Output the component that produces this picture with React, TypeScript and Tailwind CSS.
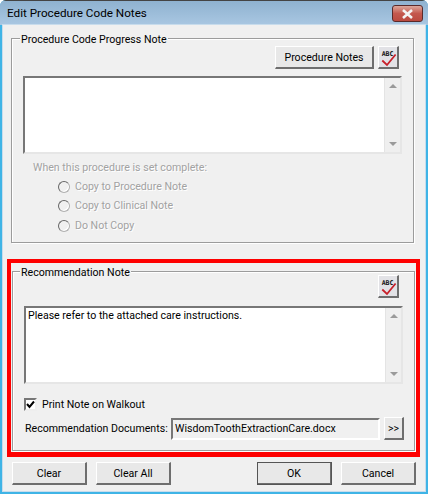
import React from "react";

const font = "font-['Roboto','Liberation_Sans',Arial,sans-serif] text-[10.6px] leading-[14px]";

function SpellIcon() {
  return (
    <svg width="18" height="20" viewBox="0 0 18 20">
      <text x="8.6" y="9" textAnchor="middle" fontFamily="'DejaVu Sans Mono',monospace" fontWeight="700" fontSize="6.6" fill="#111">ABC</text>
      <path d="M3.3 13.5 L8 18 L16.6 7.5" fill="none" stroke="#c8202a" strokeWidth="1.8" />
    </svg>
  );
}

function WinButton({ className, children, dark }: { className: string; children: React.ReactNode; dark?: boolean }) {
  return (
    <div
      className={`flex items-center justify-center bg-[#e8e8e8] text-black border border-r-2 border-b-2 border-t-white border-l-white border-r-[#6e6e6e] border-b-[#6e6e6e] ${dark ? "outline outline-1 -outline-offset-1 outline-[#555]" : ""} ${className}`}
    >
      {children}
    </div>
  );
}

function SpellButton() {
  return (
    <WinButton className="w-[21px] h-[23px] !bg-[#e2e2e6]">
      <SpellIcon />
    </WinButton>
  );
}

function NoteBox({ text, className }: { text?: string; className: string }) {
  return (
    <div className={`flex bg-white border-2 border-t-[#777] border-l-[#777] border-b-[#e6e6e6] border-r-[#e6e6e6] ${className}`}>
      <div className="flex-1 px-[2px] pt-[1px] text-black">{text}</div>
      <div className="w-[16px] bg-[#efefef] flex flex-col items-center justify-between py-[6px] border-l border-[#e4e4e4]">
        <div className="w-0 h-0 border-x-[4px] border-x-transparent border-b-[4px] border-b-[#9a9a9a]" />
        <div className="w-0 h-0 border-x-[4px] border-x-transparent border-t-[4px] border-t-[#9a9a9a]" />
      </div>
    </div>
  );
}

function Radio({ label }: { label: string }) {
  return (
    <div className="flex items-center h-[19.5px] pl-[25px]">
      <div className="w-[12px] h-[12px] rounded-full bg-[#f0f0f0] border border-[#b0b0b0] border-t-[#666] border-l-[#666] shadow-[inset_-1px_-1px_0_#fff]" />
      <span className="ml-[5px] text-[#a2a2a2] [text-shadow:1px_1px_0_#fff]">{label}</span>
    </div>
  );
}

function GroupBox({ title, className, titleClass, children }: { title: string; className: string; titleClass: string; children: React.ReactNode }) {
  return (
    <div className={`relative border border-[#9c9c9c] shadow-[inset_1px_1px_0_#fff,1px_1px_0_#fff] ${className}`}>
      <span className={`absolute top-[-6px] bg-[#f0f0f0] px-[1px] text-black ${titleClass}`}>{title}</span>
      {children}
    </div>
  );
}

export default function App() {
  return (
    <div className={`w-[428px] h-[494px] overflow-hidden rounded-t-[6px] flex flex-col bg-[#3fb4e6] ${font}`}>
      {/* title bar */}
      <div className="h-[25px] shrink-0 flex items-start justify-between bg-gradient-to-b from-[#8fb2d0] to-[#a9c7e2] pl-[7px] pr-[5px] border-t border-[#444]">
        <span className="mt-[5px] text-[11.7px] text-black">Edit Procedure Code Notes</span>
        <div className="w-[31px] h-[17px] mt-[4px] rounded-[3px] border border-[#5a2a2a] bg-gradient-to-b from-[#dba79c] via-[#c4584e] to-[#bb4a40] flex items-center justify-center">
          <svg width="13" height="10" viewBox="0 0 13 10">
            <path d="M2 1 L11 9 M11 1 L2 9" stroke="#f4f4f4" strokeWidth="2.6" />
          </svg>
        </div>
      </div>

      {/* client area */}
      <div className="mx-[3px] mb-[3px] flex-1 bg-[#f0f0f0] flex flex-col pl-[8px] pr-[11px] pt-[13px] shadow-[0_0_0_1px_#c8dcec]">
        <GroupBox title="Procedure Code Progress Note" titleClass="left-[8px]" className="h-[205px] pl-[11px] pr-[11px] pt-[7px]">
          <div className="flex justify-end gap-[4px] pr-[3px]">
            <WinButton className="w-[99px] h-[23px] pt-[1px]">Procedure Notes</WinButton>
            <SpellButton />
          </div>
          <NoteBox className="h-[78px] mt-[7px]" />
          <div className="mt-[7px] pl-[10px] text-[#a2a2a2] [text-shadow:1px_1px_0_#fff]">When this procedure is set complete:</div>
          <div className="mt-[2px] pl-[10px]">
            <Radio label="Copy to Procedure Note" />
            <Radio label="Copy to Clinical Note" />
            <Radio label="Do Not Copy" />
          </div>
        </GroupBox>

        {/* red highlight */}
        <div className="mt-[16px] border-[4px] border-[#fe0000] border-b-[5px] w-[413px] h-[198px] -ml-[4px] shrink-0 pl-[1px] pr-[1px] pt-[8px]">
          <GroupBox title="Recommendation Note" titleClass="left-[7px]" className="h-[180px] pl-[11px] pr-[11px] pt-[3px]">
            <div className="flex justify-end pr-[4px]">
              <SpellButton />
            </div>
            <NoteBox text="Please refer to the attached care instructions." className="h-[78px] mt-[8px]" />
            <div className="flex items-center mt-[13px]">
              <div className="w-[13px] h-[13px] bg-white border-2 border-t-[#777] border-l-[#777] border-b-[#eee] border-r-[#eee] flex items-center justify-center">
                <svg width="9" height="9" viewBox="0 0 9 9">
                  <path d="M1 4 L3.5 7 L8 1.5" fill="none" stroke="#000" strokeWidth="2" />
                </svg>
              </div>
              <span className="ml-[5px] pt-[1px]">Print Note on Walkout</span>
            </div>
            <div className="flex items-center mt-[5px] pl-[1px]">
              <span className="w-[146px] shrink-0 whitespace-nowrap pt-[1px]">Recommendation Documents:</span>
              <div className="w-[209px] h-[22px] shrink-0 flex items-center pl-[2px] pt-[1px] bg-[#f0f0f0] border-2 border-t-[#777] border-l-[#777] border-b-white border-r-white">WisdomToothExtractionCare.docx</div>
              <WinButton className="ml-[4px] w-[20px] h-[23px] shrink-0 pt-[1px]">&gt;&gt;</WinButton>
            </div>
          </GroupBox>
        </div>

        <div className="flex mt-[5px] pl-[1px]">
          <WinButton className="w-[75px] h-[23px] shrink-0 pt-[1px]">Clear</WinButton>
          <WinButton className="w-[75px] h-[23px] shrink-0 ml-[9px] pt-[1px]">Clear All</WinButton>
          <WinButton dark className="w-[75px] h-[23px] shrink-0 ml-[86px] pt-[1px]">OK</WinButton>
          <WinButton className="w-[75px] h-[23px] shrink-0 ml-[9px] pt-[1px]">Cancel</WinButton>
        </div>
      </div>
    </div>
  );
}
